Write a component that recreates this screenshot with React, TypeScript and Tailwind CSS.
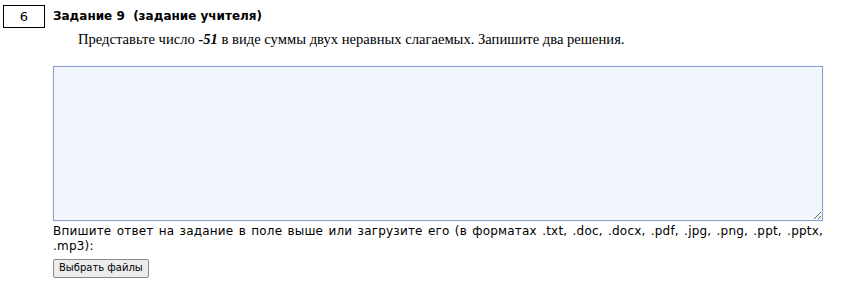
const App = () => {
  return (
    <div className="bg-white w-[845px] h-[296px] text-black font-['DejaVu_Sans',Verdana,sans-serif]">
      <div className="flex items-start pt-[5px] pl-[3px]">
        <div className="w-[42px] h-[23px] border border-black flex items-center justify-center text-[13px] leading-none">
          6
        </div>
        <div className="ml-[8px] mt-[5px] text-[12px] font-bold leading-none">
          Задание 9&nbsp; (задание учителя)
        </div>
      </div>
      <p className="pl-[78px] mt-[2px] text-[14.6px] leading-[18px] font-['Liberation_Serif',serif]">
        Представьте число <b><i>-51</i></b> в виде суммы двух неравных слагаемых. Запишите два решения.
      </p>
      <div className="pl-[53px] pr-[22px] mt-[18px]">
        <textarea className="block w-full h-[155px] border border-[#8c9fd0] bg-[#f1f6fd] resize-y outline-none shadow-[0_0_1px_#c9d3ee]" />
        <p className="mt-[3px] text-[12px] leading-[15px] text-justify tracking-[0.2px]">
          Впишите ответ на задание в поле выше или загрузите его (в форматах .txt, .doc, .docx, .pdf, .jpg, .png, .ppt, .pptx, .mp3):
        </p>
        <button className="mt-[1px] h-[19px] px-[5px] border border-[#8a8a8a] bg-[#ececec] rounded-[2px] text-[10px] leading-none font-['DejaVu_Sans',Tahoma,sans-serif]">
          Выбрать файлы
        </button>
      </div>
    </div>
  );
};

export default App;
